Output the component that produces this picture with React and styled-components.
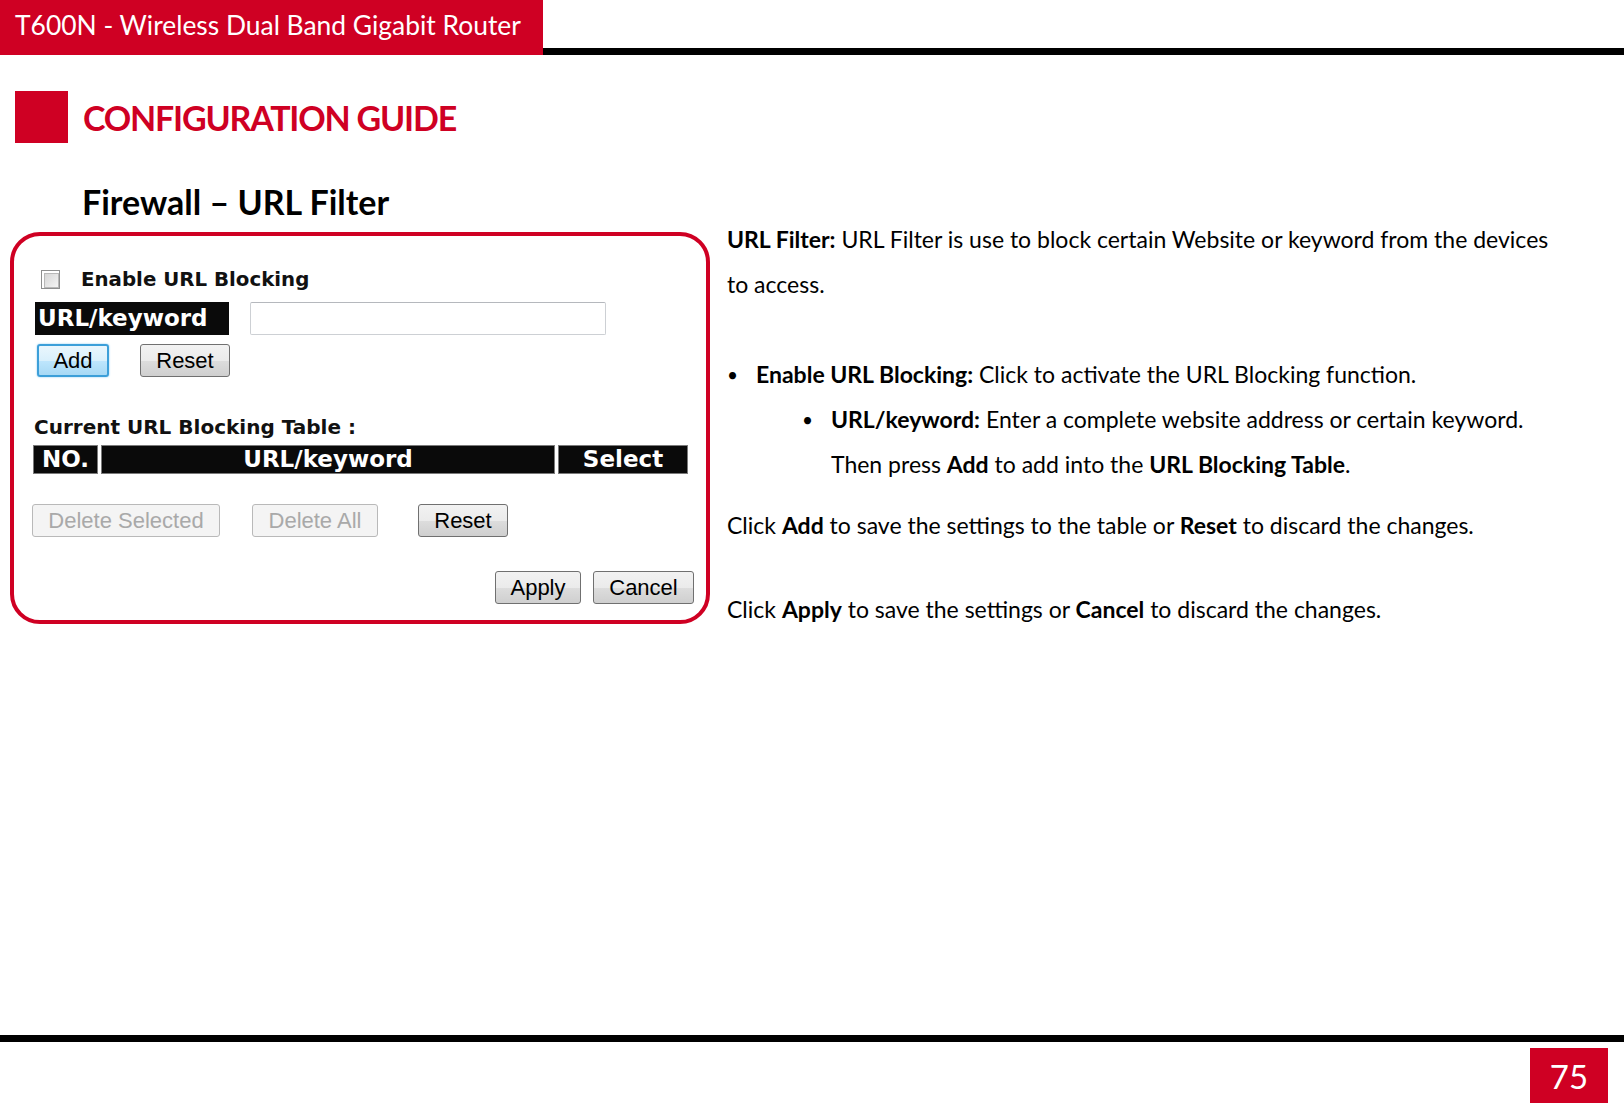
import React from "react";
import styled, { createGlobalStyle } from "styled-components";

const RED = "#cf0023";

const GlobalStyle = createGlobalStyle`
  html, body { margin: 0; padding: 0; background: #fff; }
  #root { width: 1624px; min-height: 1103px; }
  * { box-sizing: border-box; }
`;

const Page = styled.div`
  width: 1624px;
  height: 1103px;
  display: flex;
  flex-direction: column;
  background: #fff;
  font-family: Lato, "Open Sans", sans-serif;
  color: #000;
  overflow: hidden;
`;

const Header = styled.header`
  display: flex;
  height: 55px;
`;

const HeaderTab = styled.div`
  width: 543px;
  background: ${RED};
  color: #fff;
  font-size: 26.4px;
  display: flex;
  align-items: center;
  padding-left: 15px;
  padding-bottom: 6px;
`;

const HeaderRule = styled.div`
  flex: 1;
  align-self: flex-end;
  height: 7px;
  background: #000;
`;

const GuideRow = styled.div`
  display: flex;
  align-items: center;
  gap: 15px;
  margin-top: 36px;
  padding-left: 15px;
`;

const GuideSquare = styled.div`
  width: 53px;
  height: 52px;
  background: ${RED};
`;

const GuideTitle = styled.h1`
  margin: 0;
  font-size: 34px;
  letter-spacing: -1.2px;
  font-weight: 700;
  color: ${RED};
`;

const SectionTitle = styled.h2`
  margin: 39px 0 0 82px;
  font-size: 34px;
  font-weight: 700;
  line-height: 40px;
`;

const Content = styled.div`
  display: flex;
  align-items: flex-start;
  margin-top: -5px;
`;

const Panel = styled.div`
  margin-left: 10px;
  margin-top: 15px;
  width: 700px;
  height: 392px;
  border: 4px solid ${RED};
  border-radius: 30px;
  padding-top: 32px;
  display: flex;
  flex-direction: column;
  font-family: "DejaVu Sans", Verdana, sans-serif;
`;

const Row = styled.div`
  display: flex;
  align-items: center;
  margin-top: ${(p) => p.$mt || 0}px;
  padding-left: ${(p) => p.$pl || 0}px;
  padding-right: ${(p) => p.$pr || 0}px;
  justify-content: ${(p) => (p.$right ? "flex-end" : "flex-start")};
  gap: ${(p) => p.$gap || 0}px;
`;

const CheckBox = styled.span`
  width: 19px;
  height: 19px;
  border: 1px solid #8e8f8f;
  background: #fff;
  padding: 2px;
  display: inline-block;
  &::after {
    content: "";
    display: block;
    width: 100%;
    height: 100%;
    border: 1px solid #b8b8b8;
    background: linear-gradient(135deg, #d6d6d6, #f4f4f4);
  }
`;

const CheckLabel = styled.span`
  font-size: 19.8px;
  font-weight: 700;
  color: #111;
  margin-left: 21px;
`;

const DarkLabel = styled.div`
  width: 194px;
  height: 33px;
  background: #0a0a0a;
  color: #fff;
  font-weight: 700;
  font-size: 23px;
  line-height: 33px;
  padding-left: 3px;
  white-space: nowrap;
`;

const TextInput = styled.div`
  width: 356px;
  height: 33px;
  border: 1px solid #cdd0d4;
  border-top-color: #b5b8bd;
  border-radius: 2px;
  background: #fff;
`;

const Button = styled.button`
  width: ${(p) => p.$w}px;
  height: 33px;
  padding: 0;
  margin-left: ${(p) => p.$ml || 0}px;
  font-family: "Liberation Sans", Arial, sans-serif;
  font-size: 22px;
  color: ${(p) => (p.disabled ? "#a9a9a9" : "#000")};
  border: 1px solid ${(p) => (p.disabled ? "#b9b9b9" : "#707070")};
  border-radius: 3px;
  background: ${(p) =>
    p.disabled
      ? "#f4f4f4"
      : "linear-gradient(#f2f2f2 0%, #ebebeb 50%, #dddddd 51%, #cfcfcf 100%)"};
  ${(p) =>
    p.$focus &&
    `border: 2px solid #3c9fd9; box-shadow: 0 0 2px #7fc6f0; background: linear-gradient(#eaf6fd 0%, #d9f0fc 50%, #bee6fd 51%, #a7d9f5 100%);`}
`;

const Caption = styled.div`
  font-size: 20px;
  line-height: 24px;
  font-weight: 700;
  color: #111;
  padding-left: 20px;
  margin-top: 38px;
`;

const TableHead = styled.div`
  display: flex;
  gap: 3px;
  margin-top: 6px;
  padding-left: 19px;
`;

const HeadCell = styled.div`
  width: ${(p) => p.$w}px;
  height: 29px;
  background: #0a0a0a;
  border: 1px solid #7a7a7a;
  color: #fff;
  font-weight: 700;
  font-size: 23px;
  line-height: 27px;
  text-align: center;
  white-space: nowrap;
`;

const Side = styled.div`
  margin-left: 17px;
  font-size: 23px;
  line-height: 45px;
  width: 890px;
`;

const Para = styled.p`
  margin: ${(p) => p.$mt || 0}px 0 0 0;
  padding-left: ${(p) => p.$pl || 0}px;
  white-space: nowrap;
`;

const Bullet = styled.div`
  display: flex;
  padding-left: ${(p) => p.$pl}px;
  &::before {
    content: "•";
    font-size: 19px;
    width: ${(p) => p.$bw}px;
    flex: none;
  }
`;

const Footer = styled.footer`
  margin-top: auto;
  display: flex;
  flex-direction: column;
`;

const FooterRule = styled.div`
  height: 7px;
  background: #000;
`;

const PageNum = styled.div`
  align-self: flex-end;
  margin: 6px 16px 0 0;
  width: 78px;
  height: 55px;
  background: ${RED};
  color: #fff;
  font-size: 33px;
  display: flex;
  align-items: center;
  justify-content: center;
`;

export default function App() {
  return (
    <>
      <GlobalStyle />
      <Page>
        <Header>
          <HeaderTab>T600N - Wireless Dual Band Gigabit Router</HeaderTab>
          <HeaderRule />
        </Header>
        <GuideRow>
          <GuideSquare />
          <GuideTitle>CONFIGURATION GUIDE</GuideTitle>
        </GuideRow>
        <SectionTitle>Firewall – URL Filter</SectionTitle>
        <Content>
          <Panel>
            <Row $pl={27}>
              <CheckBox />
              <CheckLabel>Enable URL Blocking</CheckLabel>
            </Row>
            <Row $mt={11} $pl={21} $gap={21}>
              <DarkLabel>URL/keyword</DarkLabel>
              <TextInput />
            </Row>
            <Row $mt={9} $pl={23} $gap={31}>
              <Button $w={72} $focus>Add</Button>
              <Button $w={90}>Reset</Button>
            </Row>
            <Caption>Current URL Blocking Table :</Caption>
            <TableHead>
              <HeadCell $w={65}>NO.</HeadCell>
              <HeadCell $w={454}>URL/keyword</HeadCell>
              <HeadCell $w={130}>Select</HeadCell>
            </TableHead>
            <Row $mt={30} $pl={18}>
              <Button $w={188} disabled>Delete Selected</Button>
              <Button $w={126} $ml={32} disabled>Delete All</Button>
              <Button $w={90} $ml={40}>Reset</Button>
            </Row>
            <Row $mt={34} $right $pr={12} $gap={12}>
              <Button $w={86}>Apply</Button>
              <Button $w={101}>Cancel</Button>
            </Row>
          </Panel>
          <Side>
            <Para>
              <b>URL Filter:</b> URL Filter is use to block certain Website or keyword from the devices
              <br />
              to access.
            </Para>
            <Para $mt={45}>
              <Bullet $pl={0} $bw={29}>
                <span><b>Enable URL Blocking:</b> Click to activate the URL Blocking function.</span>
              </Bullet>
              <Bullet $pl={75} $bw={29}>
                <span><b>URL/keyword:</b> Enter a complete website address or certain keyword.</span>
              </Bullet>
            </Para>
            <Para $pl={104}>
              Then press <b>Add</b> to add into the <b>URL Blocking Table</b>.
            </Para>
            <Para $mt={16}>
              Click <b>Add</b> to save the settings to the table or <b>Reset</b> to discard the changes.
            </Para>
            <Para $mt={39}>
              Click <b>Apply</b> to save the settings or <b>Cancel</b> to discard the changes.
            </Para>
          </Side>
        </Content>
        <Footer>
          <FooterRule />
          <PageNum>75</PageNum>
        </Footer>
      </Page>
    </>
  );
}
